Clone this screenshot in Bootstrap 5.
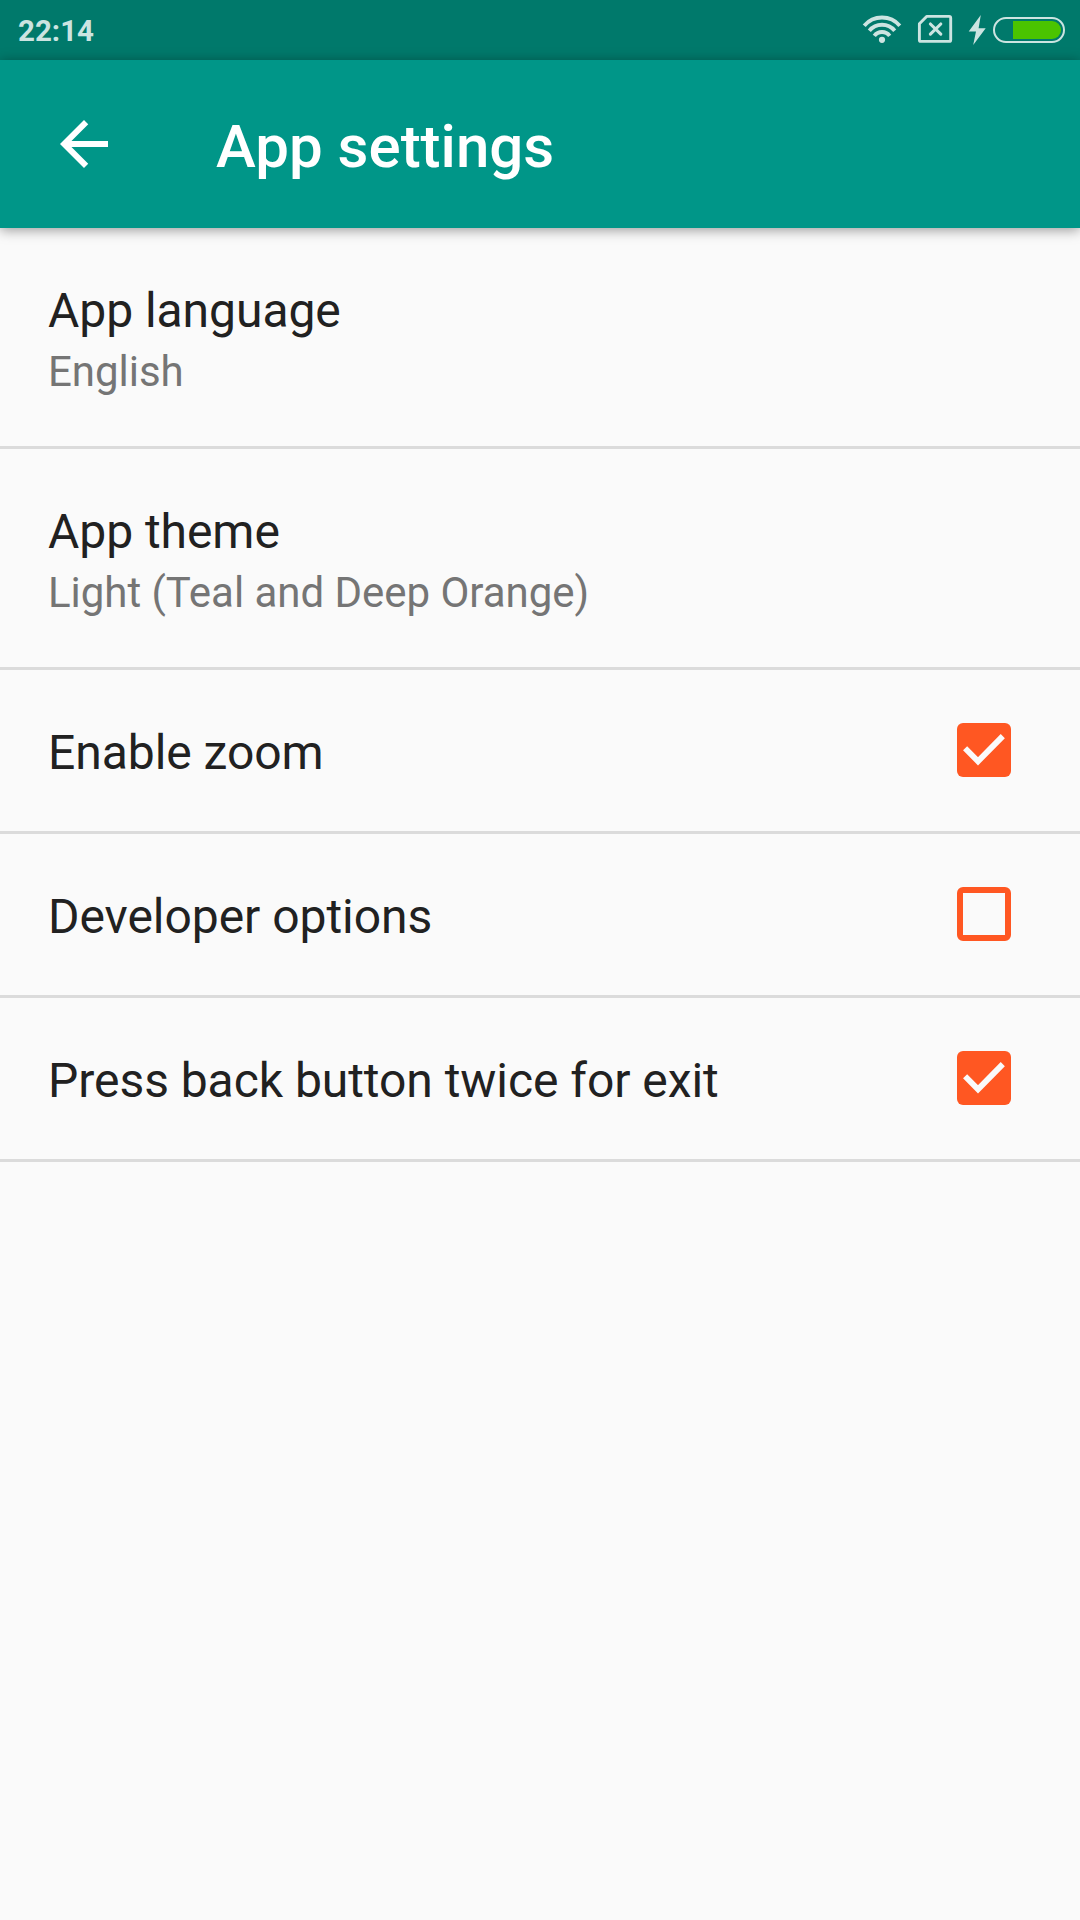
<!DOCTYPE html>
<html lang="en">
<head>
<meta charset="utf-8">
<meta name="viewport" content="width=device-width, initial-scale=1">
<title>App settings</title>
<link href="https://cdn.jsdelivr.net/npm/bootstrap@5.3.0/dist/css/bootstrap.min.css" rel="stylesheet">
<style>
body{background:#fafafa;color:#212121;font-family:Roboto,"Noto Sans",sans-serif;min-height:100vh}
.status-bar{height:60px;background:#00796b;color:#cce4e1;padding:0 0 0 18px}
.status-time{font-size:29.5px;font-weight:700;line-height:60px;padding-top:1px}
.app-bar{height:168px;background:#009688;padding:0 48px;box-shadow:0 2px 12px rgba(0,0,0,.4);z-index:1}
.app-title{font-size:60px;font-weight:500;line-height:70px;margin:6px 0 0 96px;color:#fff}
.list-group-flush>.setting-row,.list-group-flush>.setting-row:last-child{border:solid #dbdbdb;border-width:0 0 3px;padding:55px 69px 50px 48px;background:transparent;color:inherit}
.setting-name{font-size:48px;line-height:56px;letter-spacing:-.05px}
.setting-value{font-size:42px;line-height:49px;margin-top:8px;color:#757575;letter-spacing:-.03px}
.setting-check{width:54px;height:54px;margin:-2px 0 4px;display:block;flex:none}
</style>
<script src="https://cdn.jsdelivr.net/npm/bootstrap@5.3.0/dist/js/bootstrap.bundle.min.js"></script>
</head>
<body>
<div class="status-bar d-flex justify-content-between overflow-hidden">
  <span class="status-time">22:14</span>
  <svg width="230" height="60" viewBox="850 0 230 60" fill="none" stroke="#cce4e1" aria-hidden="true">
    <g stroke-width="3.9">
      <path d="M864.2 25.7A23.5 23.5 0 0 1 899.8 25.7"/>
      <path d="M869.3 30.8A16.4 16.4 0 0 1 894.7 30.8"/>
      <path d="M874.3 35.8A9.6 9.6 0 0 1 889.7 35.8"/>
    </g>
    <circle cx="882" cy="39.8" r="3.1" fill="#cce4e1" stroke="none"/>
    <path d="M926.6 16.4H949.2Q950.7 16.4 950.7 17.9V39.9Q950.7 41.4 949.2 41.4H920.9Q919.4 41.4 919.4 39.9V23.8Z" stroke-width="2.9" stroke-linejoin="round"/>
    <path d="M930.4 24L940.8 34.2M940.8 24L930.4 34.2" stroke-width="3.1" stroke-linecap="round"/>
    <path d="M980.8 15L968.7 31.6H976L973.2 45L985.7 28.3H978.6Z" fill="#cce4e1" stroke="none"/>
    <rect x="994" y="18" width="70" height="24" rx="12" stroke-width="2"/>
    <path d="M1013 21H1052A9 9 0 0 1 1052 39H1013Z" fill="#4ac400" stroke="none"/>
  </svg>
</div>
<header class="app-bar d-flex align-items-center position-relative">
  <svg width="72" height="72" viewBox="0 0 24 24" fill="#fff" role="img" aria-label="Back"><path d="M20 11H7.83l5.59-5.59L12 4l-8 8 8 8 1.41-1.41L7.83 13H20z"/></svg>
  <h1 class="app-title">App settings</h1>
</header>
<main class="list-group list-group-flush">
  <div class="list-group-item setting-row">
    <div class="setting-name">App language</div>
    <div class="setting-value">English</div>
  </div>
  <div class="list-group-item setting-row">
    <div class="setting-name">App theme</div>
    <div class="setting-value">Light (Teal and Deep Orange)</div>
  </div>
  <div class="list-group-item setting-row d-flex justify-content-between">
    <div class="setting-name">Enable zoom</div>
    <svg class="setting-check" viewBox="0 0 54 54"><rect width="54" height="54" rx="6" fill="#ff5722"/><path d="M8.1 25.3L21 38.3L45.8 13.1" fill="none" stroke="#fafafa" stroke-width="5.8"/></svg>
  </div>
  <div class="list-group-item setting-row d-flex justify-content-between">
    <div class="setting-name">Developer options</div>
    <svg class="setting-check" viewBox="0 0 54 54"><path fill-rule="evenodd" d="M6 0H48A6 6 0 0 1 54 6V48A6 6 0 0 1 48 54H6A6 6 0 0 1 0 48V6A6 6 0 0 1 6 0ZM6 6V48H48V6Z" fill="#ff5722"/></svg>
  </div>
  <div class="list-group-item setting-row d-flex justify-content-between">
    <div class="setting-name">Press back button twice for exit</div>
    <svg class="setting-check" viewBox="0 0 54 54"><rect width="54" height="54" rx="6" fill="#ff5722"/><path d="M8.1 25.3L21 38.3L45.8 13.1" fill="none" stroke="#fafafa" stroke-width="5.8"/></svg>
  </div>
</main>
</body>
</html>
